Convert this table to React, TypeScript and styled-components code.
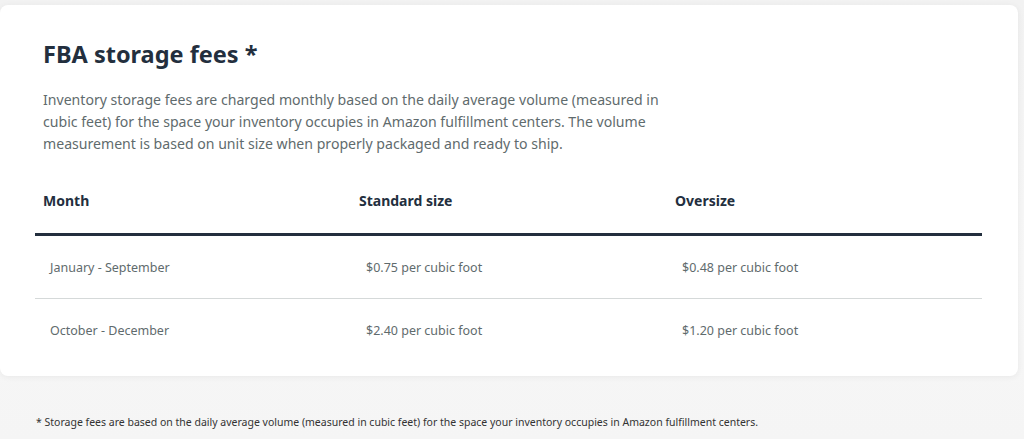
import React, { FC } from 'react'
import styled, { createGlobalStyle } from 'styled-components'

const GlobalStyle = createGlobalStyle`
  html, body {
    margin: 0;
    padding: 0;
    background: #f4f4f4;
  }
  body {
    font-family: 'Noto Sans', 'Open Sans', Arial, sans-serif;
    -webkit-font-smoothing: antialiased;
  }
`

const Page = styled.div`
  width: 1024px;
  height: 439px;
  overflow: hidden;
  padding-top: 5px;
  box-sizing: border-box;
  background: linear-gradient(180deg, #f2f2f2 0%, #f7f7f7 60%, #f5f5f5 100%);
`

const Card = styled.section`
  width: 1018px;
  height: 371px;
  box-sizing: border-box;
  background: #fff;
  border-radius: 8px;
  box-shadow: 0 1px 6px rgba(0, 0, 0, 0.06);
  padding: 34px 42px 0 35px;
`

const Title = styled.h2`
  margin: 0 0 0 8px;
  font-size: 23.5px;
  line-height: 30px;
  font-weight: 700;
  color: #232f3e;
`

const Intro = styled.p`
  margin: 20px 0 0 8px;
  width: 700px;
  font-size: 14.1px;
  line-height: 22px;
  color: #5f6b6d;
`

const Table = styled.div`
  margin-top: 36px;
  width: 947px;
`

const HeadRow = styled.div`
  display: grid;
  grid-template-columns: 316px 316px 1fr;
  height: 45px;
  box-sizing: border-box;
  padding-top: 2px;
  border-bottom: 3px solid #232f3e;
`

const HeadCell = styled.div`
  padding-left: 8px;
  font-size: 14px;
  font-weight: 700;
  color: #232f3e;
  line-height: 16px;
`

const Row = styled.div<{ $last?: boolean }>`
  display: grid;
  grid-template-columns: 316px 316px 1fr;
  align-items: center;
  height: 62px;
  border-bottom: ${(p) => (p.$last ? 'none' : '1px solid #d5d9d9')};
`

const Cell = styled.div`
  padding-left: 15px;
  font-size: 12.5px;
  color: #5f6b6d;
`

const Footnote = styled.p`
  margin: 39px 0 0 36px;
  font-size: 10.5px;
  color: #333;
`

const rows = [
  ['January - September', '$0.75 per cubic foot', '$0.48 per cubic foot'],
  ['October - December', '$2.40 per cubic foot', '$1.20 per cubic foot']
]

const App: FC = () => {
  return (
    <Page>
      <GlobalStyle />
      <Card>
        <Title>FBA storage fees *</Title>
        <Intro>
          Inventory storage fees are charged monthly based on the daily average
          volume (measured in
          <br />
          cubic feet) for the space your inventory occupies in Amazon
          fulfillment centers. The volume
          <br />
          measurement is based on unit size when properly packaged and ready to
          ship.
        </Intro>
        <Table>
          <HeadRow>
            <HeadCell>Month</HeadCell>
            <HeadCell>Standard size</HeadCell>
            <HeadCell>Oversize</HeadCell>
          </HeadRow>
          {rows.map((row, i) => (
            <Row key={row[0]} $last={i === rows.length - 1}>
              {row.map((cell) => (
                <Cell key={cell}>{cell}</Cell>
              ))}
            </Row>
          ))}
        </Table>
      </Card>
      <Footnote>
        * Storage fees are based on the daily average volume (measured in cubic
        feet) for the space your inventory occupies in Amazon fulfillment
        centers.
      </Footnote>
    </Page>
  )
}

export default App
